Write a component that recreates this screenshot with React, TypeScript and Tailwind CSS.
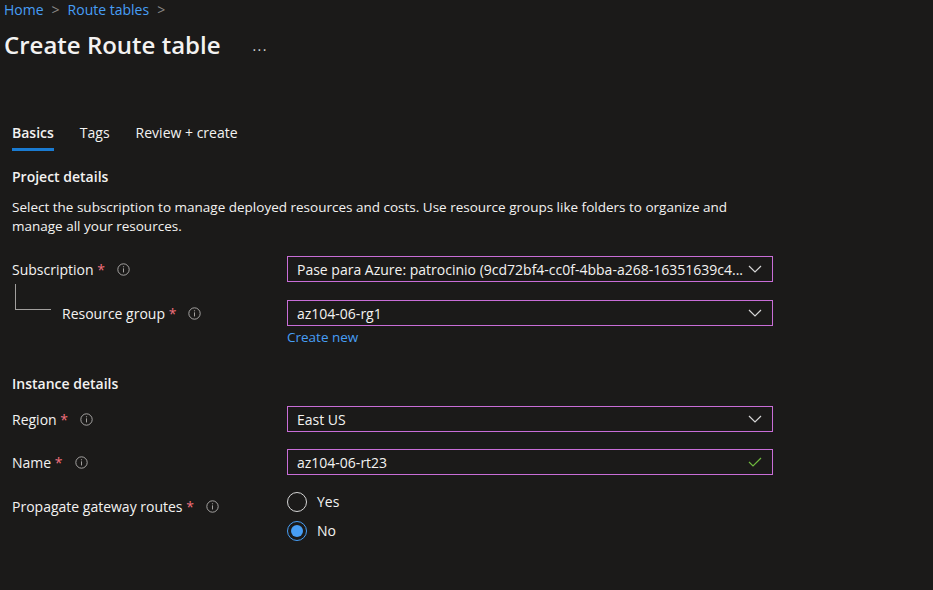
import React from 'react';

const font = { fontFamily: '"Open Sans", "Noto Sans", sans-serif' };

const InfoIcon = () => (
  <svg width="13" height="13" viewBox="0 0 16 16" className="shrink-0">
    <circle cx="8" cy="8" r="7" fill="none" stroke="#b5b3b1" strokeWidth="1.1" />
    <rect x="7.45" y="6.6" width="1.1" height="5" fill="#b5b3b1" />
    <circle cx="8" cy="4.6" r="0.75" fill="#b5b3b1" />
  </svg>
);

const Chevron = () => (
  <svg width="14" height="8" viewBox="0 0 14 8" className="shrink-0">
    <path d="M1 1l6 6 6-6" fill="none" stroke="#d6d6d6" strokeWidth="1.2" />
  </svg>
);

const Check = () => (
  <svg width="14" height="10" viewBox="0 0 14 10" className="shrink-0">
    <path d="M1 5l4 4 8-8" fill="none" stroke="#6fb83e" strokeWidth="1.2" />
  </svg>
);

const Label = ({ text, indent = false }: { text: string; indent?: boolean }) => (
  <div className={`flex items-center gap-3 text-[14px] text-[#f3f2f1] ${indent ? 'pl-[50px]' : ''}`}>
    <span>
      {text} <span className="text-[#f1707b]">*</span>
    </span>
    <InfoIcon />
  </div>
);

const Field = ({ value, check = false }: { value: string; check?: boolean }) => (
  <div className="flex h-[26px] w-[486px] items-center justify-between border border-[#c86dd7] pl-[9px] pr-[10px] text-[14px] text-[#f3f2f1]">
    <span className="truncate">{value}</span>
    {check ? <Check /> : <Chevron />}
  </div>
);

const Radio = ({ label, checked }: { label: string; checked?: boolean }) => (
  <div className="flex h-[29px] items-center gap-[10px] text-[14px] text-[#f3f2f1]">
    <div
      className={`flex h-[20px] w-[20px] items-center justify-center rounded-full border ${
        checked ? 'border-[#479ef5]' : 'border-[#d6d6d6]'
      }`}
    >
      {checked && <div className="h-[12px] w-[12px] rounded-full bg-[#479ef5]" />}
    </div>
    <span>{label}</span>
  </div>
);

export default function App() {
  return (
    <div className="h-[590px] w-[933px] overflow-hidden bg-[#1b1a19] text-[#f3f2f1]" style={font}>
      {/* Breadcrumb */}
      <div className="flex items-center gap-2 px-1 pt-0 text-[14px] leading-[20px] text-[#479ef5]">
        <span>Home</span>
        <span className="text-[#8a8886]">&gt;</span>
        <span>Route tables</span>
        <span className="text-[#8a8886]">&gt;</span>
      </div>

      {/* Title */}
      <div className="mt-[11px] flex items-center px-1">
        <h1 className="text-[24px] font-semibold leading-[28px]">Create Route table</h1>
        <span className="ml-[32px] text-[14px] tracking-widest text-[#d6d6d6]">...</span>
      </div>

      {/* Tabs */}
      <div className="mt-[64px] flex gap-[26px] px-3 text-[14px]">
        <div className="flex flex-col">
          <span className="font-semibold leading-[20px]">Basics</span>
          <div className="mt-[5px] h-[3px] w-full bg-[#1a7bd1]" />
        </div>
        <span className="leading-[20px]">Tags</span>
        <span className="leading-[20px]">Review + create</span>
      </div>

      <div className="px-3">
        <div className="mt-[16px] text-[14px] font-semibold leading-[20px]">Project details</div>
        <p className="mt-[11px] w-[740px] text-[13.5px] leading-[19px]">
          Select the subscription to manage deployed resources and costs. Use resource groups like folders to organize and manage all your resources.
        </p>

        <div className="mt-[20px] grid grid-cols-[275px_486px] items-center">
          <Label text="Subscription" />
          <Field value="Pase para Azure: patrocinio (9cd72bf4-cc0f-4bba-a268-16351639c4..." />
        </div>

        <div className="relative mt-[18px] grid grid-cols-[275px_486px] items-center">
          <div className="absolute left-[3px] top-[-16px] h-[26px] w-[36px] border-b border-l border-[#a19f9d]" />
          <Label text="Resource group" indent />
          <Field value="az104-06-rg1" />
        </div>
        <div className="grid grid-cols-[275px_486px]">
          <div />
          <span className="text-[13.5px] leading-[22px] text-[#479ef5]">Create new</span>
        </div>

        <div className="mt-[26px] text-[14px] font-semibold leading-[20px]">Instance details</div>

        <div className="mt-[12px] grid grid-cols-[275px_486px] items-center">
          <Label text="Region" />
          <Field value="East US" />
        </div>
        <div className="mt-[17px] grid grid-cols-[275px_486px] items-center">
          <Label text="Name" />
          <Field value="az104-06-rt23" check />
        </div>

        <div className="mt-[12px] grid grid-cols-[275px_486px] items-start">
          <div className="pt-[9px]">
            <Label text="Propagate gateway routes" />
          </div>
          <div className="flex flex-col">
            <Radio label="Yes" />
            <Radio label="No" checked />
          </div>
        </div>
      </div>
    </div>
  );
}
